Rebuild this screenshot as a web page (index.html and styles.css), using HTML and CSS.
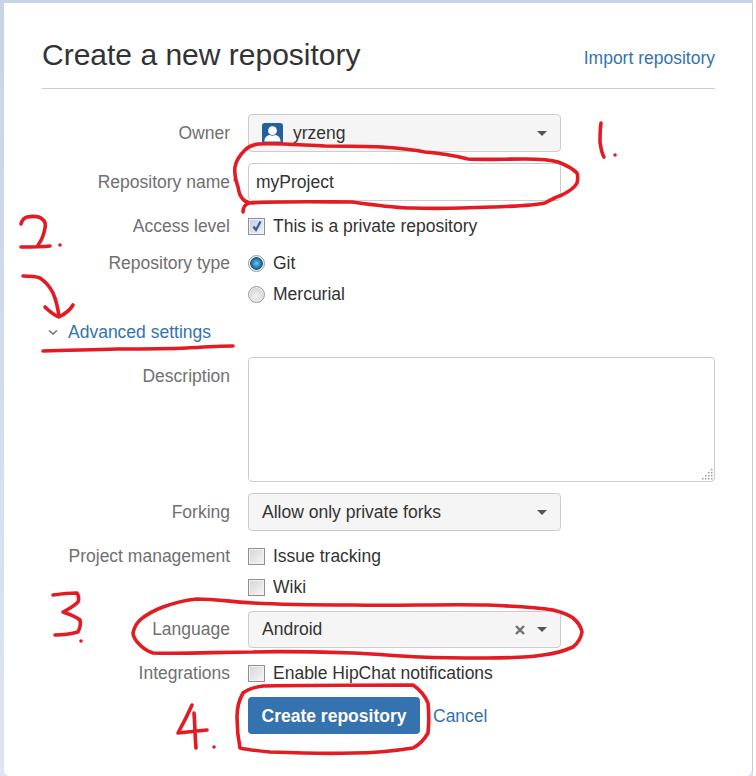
FILE: index.html
```html
<!DOCTYPE html>
<html lang="en">
<head>
  <meta charset="UTF-8" />
  <meta name="viewport" content="width=device-width, initial-scale=1" />
  <title>Create a new repository</title>
  <link rel="stylesheet" href="styles.css">
</head>
<body>
  <main class="card">
    <header class="page-head">
      <h1>Create a new repository</h1>
      <a class="link" href="#">Import repository</a>
    </header>

    <form class="repo-form">
      <div class="row row-control">
        <label>Owner</label>
        <div class="select">
          <svg class="avatar" width="21" height="21" viewBox="0 0 22 22">
            <rect width="22" height="22" rx="3" fill="#23609c"/>
            <circle cx="11" cy="8" r="4.6" fill="#fff"/>
            <path d="M2.5 19.5c0-4.5 3-6.3 5.5-6.8 1.8 1 4.200 1 6 0 2.500.5 5.500 2.300 5.500 6.800z" fill="#fff"/>
          </svg>
          <span class="select-value">yrzeng</span>
          <span class="caret"></span>
        </div>
      </div>

      <div class="row row-control row-name">
        <label>Repository name<span class="required"></span></label>
        <input class="text-input" type="text" value="myProject">
      </div>

      <div class="row row-check">
        <label>Access level</label>
        <div class="check-line">
          <span class="checkbox checkbox-on">
            <svg width="14" height="14" viewBox="0 0 14 14"><path d="M3.500 7.500l2.500 3.500 4.500-8.500" fill="none" stroke="#3d5a9a" stroke-width="2.200"/></svg>
          </span>
          This is a private repository
        </div>
      </div>

      <div class="row row-check row-tight">
        <label>Repository type</label>
        <div class="check-line"><span class="radio radio-on"></span>Git</div>
      </div>
      <div class="row row-check row-last">
        <label></label>
        <div class="check-line"><span class="radio"></span>Mercurial</div>
      </div>

      <div class="advanced">
        <svg width="10" height="7" viewBox="0 0 10 7"><path d="M1 1.500l4 3.500 4-3.500" fill="none" stroke="#707070" stroke-width="1.600"/></svg>
        <a class="link" href="#">Advanced settings</a>
      </div>

      <div class="row row-text">
        <label>Description</label>
        <div class="textarea">
          <svg class="grip" width="12" height="12" viewBox="0 0 12 12">
            <path d="M10 1h1.500v1.500H10zM7 4h1.500v1.500H7zM10 4h1.500v1.500H10zM4 7h1.500v1.500H4zM7 7h1.500v1.500H7zM10 7h1.500v1.500H10zM1 10h1.500v1.500H1zM4 10h1.500v1.500H4zM7 10h1.500v1.500H7zM10 10h1.500v1.500H10z" fill="#9a9a9a"/>
          </svg>
        </div>
      </div>

      <div class="row row-control row-forking">
        <label>Forking</label>
        <div class="select">
          <span class="select-value">Allow only private forks</span>
          <span class="caret"></span>
        </div>
      </div>

      <div class="row row-check row-tight">
        <label>Project management</label>
        <div class="check-line"><span class="checkbox"></span>Issue tracking</div>
      </div>
      <div class="row row-check row-wiki">
        <label></label>
        <div class="check-line"><span class="checkbox"></span>Wiki</div>
      </div>

      <div class="row row-control row-language">
        <label>Language</label>
        <div class="select">
          <span class="select-value">Android</span>
          <svg class="clear" width="10" height="10" viewBox="0 0 10 10"><path d="M1 1l8 8M9 1l-8 8" stroke="#707070" stroke-width="2.400"/></svg>
          <span class="caret"></span>
        </div>
      </div>

      <div class="row row-check row-integrations">
        <label>Integrations</label>
        <div class="check-line"><span class="checkbox"></span>Enable HipChat notifications</div>
      </div>

      <div class="row row-actions">
        <label></label>
        <div class="actions">
          <button type="button" class="btn-primary">Create repository</button>
          <a class="link link-cancel" href="#">Cancel</a>
        </div>
      </div>
    </form>
  </main>

  <!-- red marker drawn over the screenshot -->
  <svg class="marker" width="756" height="776" viewBox="0 0 756 776">
    <g fill="none" stroke="#e31b23" stroke-width="3.600" stroke-linecap="round" stroke-linejoin="round">
      <path d="M601 123C600 130 600 137 600 142C601 149 602 154 604 157"/>
      <path d="M243 212C243 208 245 204 249 203C280 201 325 202 352 202C375 205 395 208 412 208C440 209 468 208 492 207C515 206 532 206 545 203C552 199 556 197 562 195C570 191 575 187 577 183C578 179 578 176 577 173C572 168 566 165 558 162C548 159 537 159 525 159C505 159 485 160 468 159C452 155 440 153 425 152C410 149 396 148 382 147C362 146 342 146 325 146C300 145 278 143 258 144C251 145 248 147 245 150C240 155 236 160 235 167C234 174 236 181 238 187C239 193 240 196 242 198C244 201 246 202 248 202"/>
      <path d="M21 224C22 220 24 218 27 217C33 216 39 216 42 219C45 221 46 224 45 228C44 234 42 240 38 245M21 247C30 247 40 247 50 246"/>
      <path d="M23 276C29 276 35 276 40 278C46 282 50 287 53 293C56 300 58 308 59 317M45 307C50 312 54 315 59 317C65 314 70 310 73 305"/>
      <path d="M43 351C70 350 95 350 117 349C140 349 165 349 187 348C203 347 218 346 233 346"/>
      <path d="M53 595C60 594 70 593 77 593C79 596 79 599 78 602C74 606 69 609 63 612C69 614 75 616 80 620C81 624 80 628 78 632C71 634 63 635 55 635"/>
      <path d="M133 633C134 628 136 624 140 620C147 614 155 610 163 607C174 603 185 600 197 599C215 599 234 602 253 603C285 605 320 605 353 605C397 606 442 604 487 605C510 606 532 607 553 610C561 612 568 614 573 618C578 622 581 627 582 632C581 638 578 643 573 647C564 651 554 654 543 655C525 658 506 658 487 658C465 658 442 658 420 657C398 656 375 654 353 653C320 652 286 651 253 652C220 652 186 654 153 653C147 651 143 648 140 645C136 641 133 637 133 633Z"/>
      <path d="M192 705C188 714 183 724 178 733C187 732 197 731 207 730M194 713C195 725 195 737 196 748"/>
      <path d="M240 748C238 738 237 728 237 717C237 708 239 700 243 693C248 689 255 687 263 686C313 685 363 685 413 685C419 689 425 696 428 703C429 713 429 723 428 733C424 740 419 745 413 748C394 751 374 753 353 753C325 754 297 753 270 752C259 751 249 750 240 748Z"/>
    </g>
    <g fill="#e31b23">
      <circle cx="615" cy="155" r="1.800"/>
      <circle cx="60" cy="245" r="1.800"/>
      <circle cx="81" cy="641" r="1.800"/>
      <circle cx="214" cy="747" r="1.800"/>
    </g>
  </svg>
</body>
</html>
```

FILE: styles.css
```css
* {
  box-sizing: border-box;
}
body {
  margin: 0;
  height: 776px;
  overflow: hidden;
  padding: 3px 3px 0 4px;
  position: relative;
  background: #fff linear-gradient(#c6d4e5, #dde5f2) no-repeat;
  background-size: 753px 100%;
  font-family: "Liberation Sans", Arial, sans-serif;
  font-size: 17.5px;
  color: #333;
}
.card {
  height: 773px;
  padding: 0 38px;
  background: #fff;
  border-right: 1px solid #ccc;
  border-bottom-left-radius: 6px;
  border-bottom-right-radius: 6px;
}
.page-head {
  display: flex;
  justify-content: space-between;
  align-items: flex-start;
  height: 86px;
  padding-top: 35px;
  margin-right: -1px;
  border-bottom: 1px solid #ccc;
}
h1 {
  margin: 0;
  font-size: 30px;
  font-weight: 400;
  line-height: 34px;
  color: #333;
}
.page-head .link {
  margin-top: 10px;
}
.link {
  color: #3572b0;
  text-decoration: none;
}
.repo-form {
  padding-top: 25px;
}
.row {
  display: grid;
  grid-template-columns: 188px 1fr;
  column-gap: 18px;
  align-items: center;
}
.row label {
  position: relative;
  text-align: right;
  color: #707070;
  white-space: nowrap;
}
.required {
  position: absolute;
  right: -7px;
  top: 6px;
  width: 4px;
  height: 4px;
  border-radius: 50%;
  background: #ee8a8e;
}
.row-control {
  height: 38px;
  margin-bottom: 11px;
}
.row-name {
  margin-bottom: 13px;
}
.row-check {
  height: 24px;
  margin-bottom: 13px;
}
.row-tight {
  margin-bottom: 7px;
}
.row-last {
  margin-bottom: 14px;
}
.row-forking {
  margin-bottom: 13px;
}
.row-wiki {
  margin-bottom: 12px;
}
.row-language {
  height: 37px;
  margin-bottom: 13px;
}
.row-integrations {
  margin-bottom: 12px;
}
.select {
  display: flex;
  align-items: center;
  width: 313px;
  height: 100%;
  padding: 0 13px;
  background: #f5f5f5;
  border: 1px solid #ccc;
  border-radius: 4px;
}
.select-value {
  flex: 1;
  color: #333;
}
.avatar {
  margin-right: 10px;
}
.caret {
  margin-left: 10px;
  border-left: 5px solid transparent;
  border-right: 5px solid transparent;
  border-top: 5px solid #555;
}
.clear {
  margin-right: 2px;
}
.text-input {
  width: 313px;
  height: 38px;
  padding: 0 7px;
  border: 1px solid #ccc;
  border-radius: 4px;
  font: inherit;
  color: #333;
}
.check-line {
  display: flex;
  align-items: center;
  gap: 8px;
  color: #333;
}
.checkbox {
  display: flex;
  align-items: center;
  justify-content: center;
  width: 17px;
  height: 17px;
  border: 1px solid #8f8f8f;
  background: linear-gradient(135deg, #d6d6d6, #f6f6f6);
  box-shadow: inset 0 0 0 1px #f2f2f2;
}
.checkbox-on {
  background: linear-gradient(135deg, #c3cbe0, #eef1f8);
}
.radio {
  width: 17px;
  height: 17px;
  border: 1px solid #9a9a9a;
  border-radius: 50%;
  background: radial-gradient(circle at 50% 60%, #f2f2f2, #c9c9c9);
  box-shadow: inset 0 0 0 1px #f0f0f0;
}
.radio-on {
  background: radial-gradient(circle at 50% 50%, #6cc6ea 0, #1b6f9e 48%, #0d4a72 58%, #f4f4f4 64%);
}
.advanced {
  display: flex;
  align-items: center;
  gap: 10px;
  height: 24px;
  margin-bottom: 13px;
  padding-left: 6px;
}
.row-text {
  align-items: start;
  margin-bottom: 11px;
}
.row-text label {
  padding-top: 9px;
}
.textarea {
  position: relative;
  height: 125px;
  margin-right: -1px;
  background: #fff;
  border: 1px solid #ccc;
  border-radius: 4px;
}
.grip {
  position: absolute;
  right: 1px;
  bottom: 1px;
}
.actions {
  display: flex;
  align-items: center;
  gap: 13px;
}
.btn-primary {
  width: 172px;
  height: 37px;
  padding-top: 2px;
  border: none;
  border-radius: 4px;
  background: #3572b0;
  color: #fff;
  font: inherit;
  font-weight: 700;
}
.link-cancel {
  padding-top: 2px;
}
.marker {
  position: absolute;
  left: 0;
  top: 0;
}
```
